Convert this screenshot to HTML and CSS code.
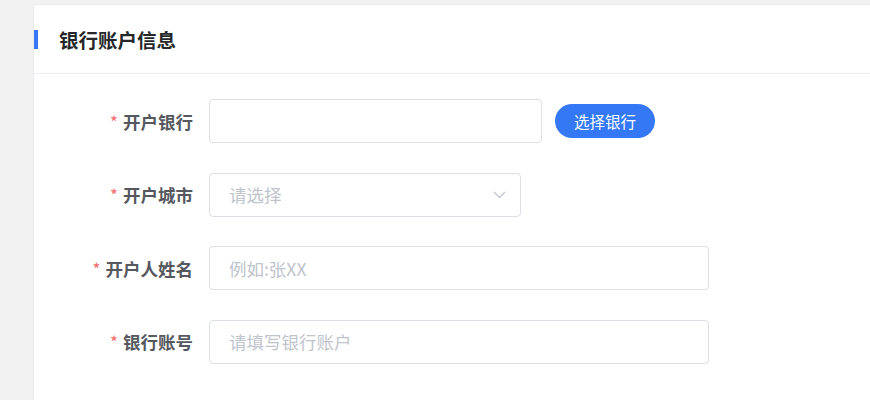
FILE: index.html
```html
<!DOCTYPE html>
<html lang="zh-CN">
<head>
    <meta charset="UTF-8">
    <meta name="viewport" content="width=device-width, initial-scale=1.0">
    <title>银行账户信息</title>
    <link rel="stylesheet" href="styles.css">
</head>
<body>
    <div class="page">
        <div class="card">
            <div class="card-header">
                <h2 class="card-title">银行账户信息</h2>
            </div>

            <!-- 表单 -->
            <form class="form">
                <div class="form-row">
                    <label class="form-label"><span class="req">*</span>开户银行</label>
                    <input class="form-input input-bank" type="text">
                    <button type="button" class="btn-primary">选择银行</button>
                </div>
                <div class="form-row">
                    <label class="form-label"><span class="req">*</span>开户城市</label>
                    <div class="form-input form-select">
                        <span class="placeholder">请选择</span>
                        <svg class="chevron" width="13" height="8" viewBox="0 0 13 8">
                            <path d="M1 1 L6.5 6.5 L12 1" fill="none" stroke="#c0c4cc" stroke-width="1.3"/>
                        </svg>
                    </div>
                </div>
                <div class="form-row">
                    <label class="form-label"><span class="req">*</span>开户人姓名</label>
                    <input class="form-input input-wide" type="text" placeholder="例如:张XX">
                </div>
                <div class="form-row">
                    <label class="form-label"><span class="req">*</span>银行账号</label>
                    <input class="form-input input-wide" type="text" placeholder="请填写银行账户">
                </div>
            </form>
        </div>
    </div>
</body>
</html>
```

FILE: styles.css
```css
body {
    margin: 0;
    background: #f2f2f3;
    font-family: 'Noto Sans CJK SC', 'Noto Sans', sans-serif;
}

.page {
    padding: 5px 0 0 34px;
    height: 395px;
    overflow: hidden;
}

.card {
    background: #fff;
    border-radius: 4px 0 0 0;
    box-shadow: 0 0 3px rgba(0, 0, 0, 0.07);
    height: 100%;
}

.card-header {
    height: 68px;
    border-bottom: 1px solid #ebeef5;
    display: flex;
    align-items: center;
}

.card-title {
    margin: 0;
    border-left: 4px solid #3478f6;
    padding-left: 21px;
    height: 19px;
    line-height: 19px;
    font-size: 19.5px;
    font-weight: bold;
    color: #262729;
}

.form {
    padding-top: 25px;
    display: flex;
    flex-direction: column;
    gap: 29.5px;
}

.form-row {
    display: flex;
    align-items: center;
}

.form-label {
    width: 159px;
    padding-right: 16px;
    text-align: right;
    font-size: 17.5px;
    font-weight: bold;
    color: #55585e;
}

.req {
    color: #f56c6c;
    font-weight: normal;
    font-size: 17px;
    margin-right: 5px;
}

.form-input {
    box-sizing: border-box;
    height: 44px;
    border: 1px solid #dcdfe6;
    border-radius: 4px;
    padding: 0 19px;
    font-family: inherit;
    font-size: 17.5px;
    color: #606266;
    background: #fff;
    outline: none;
}

.form-input::placeholder {
    color: #c0c4cc;
}

.input-bank {
    width: 333px;
}

.input-wide {
    width: 500px;
}

.form-select {
    width: 312px;
    display: flex;
    align-items: center;
    justify-content: space-between;
    padding-right: 14px;
}

.placeholder {
    color: #c0c4cc;
}

.chevron {
    display: block;
}

.btn-primary {
    margin-left: 13px;
    width: 100px;
    height: 34px;
    border: none;
    border-radius: 17px;
    background: #3478f6;
    color: #fff;
    font-family: inherit;
    font-size: 15.5px;
    cursor: pointer;
}
```
